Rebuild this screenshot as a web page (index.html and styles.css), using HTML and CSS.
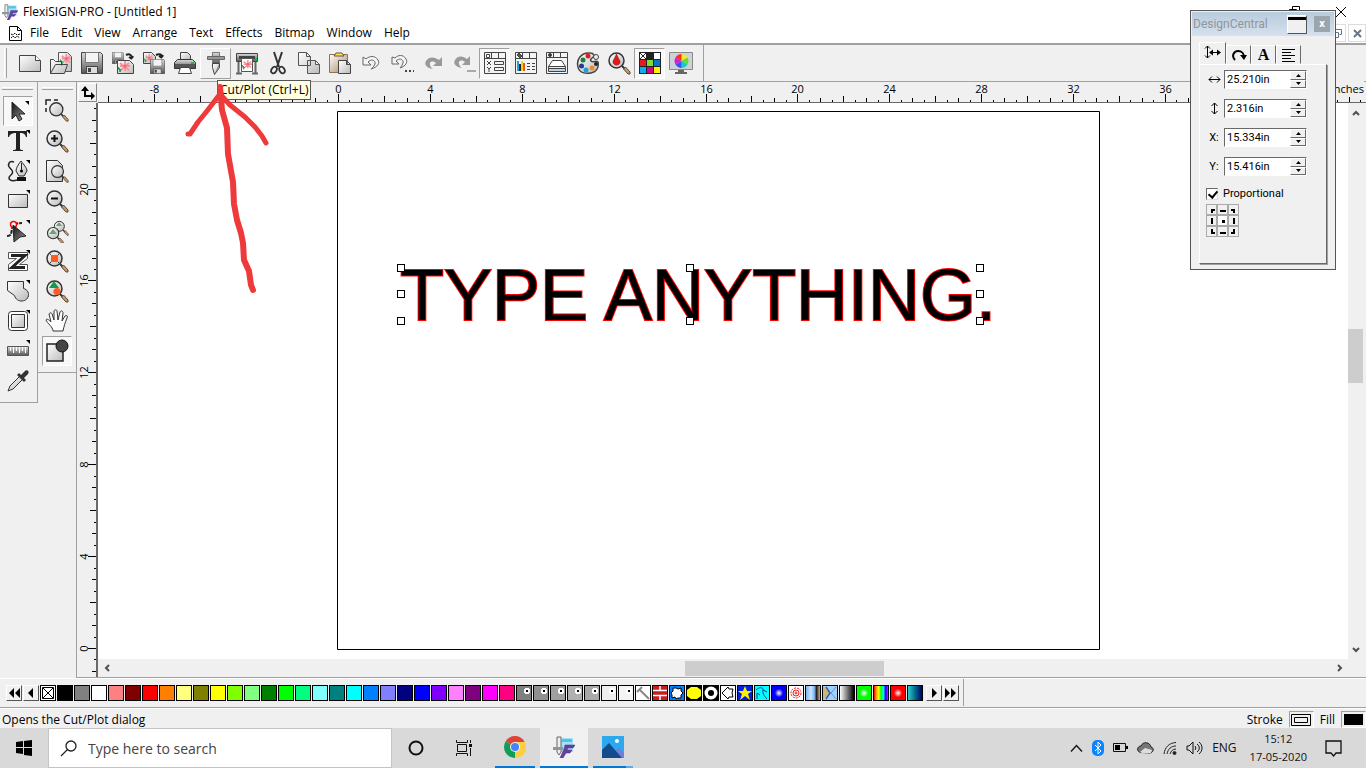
FILE: index.html
```html
<!DOCTYPE html>
<html lang="en">
<head>
<meta charset="UTF-8">
<meta name="viewport" content="width=device-width, initial-scale=1.0">
<title>FlexiSIGN-PRO - [Untitled 1]</title>
<link rel="stylesheet" href="styles.css">
</head>
<body>

<!-- shared gradients and symbols -->
<svg class="defs" aria-hidden="true">
<defs>
<linearGradient id="g" x1="0" y1="0" x2="1" y2="1"><stop offset="0" stop-color="#fff"/><stop offset="1" stop-color="#bbb"/></linearGradient>
<linearGradient id="gd" x1="0" y1="0" x2="0" y2="1"><stop offset="0" stop-color="#ddd"/><stop offset="1" stop-color="#555"/></linearGradient>
<linearGradient id="dk" x1="0" y1="0" x2="1" y2="1"><stop offset="0" stop-color="#111"/><stop offset="1" stop-color="#999"/></linearGradient>
<linearGradient id="tan" x1="0" y1="0" x2="1" y2="1"><stop offset="0" stop-color="#fff"/><stop offset="1" stop-color="#a8845c"/></linearGradient>
<symbol id="lens" viewBox="0 0 24 24"><path d="M15 15l3 3" stroke="#333" stroke-width="2"/><path d="M16.500 18l2-2 4.500 5v2h-2z" fill="#c59a6c" stroke="#5a4630"/><circle cx="9.500" cy="9.500" r="7.500" fill="url(#g)" stroke="#333" stroke-width="1.500"/></symbol>
<symbol id="flower" viewBox="0 0 12 12"><path d="M7 0v10M2 2l9 7M11 2L3 9M2 5h10" stroke="#f4929a" stroke-width="1.800"/><circle cx="7" cy="5" r="1.500" fill="#ea6670"/><path d="M0 6l3 3-1 2z" fill="#22a045" stroke="#22a045"/></symbol>
<symbol id="floppy" viewBox="0 0 22 22"><path d="M.5 .5h19l2 2v19H.5z" fill="url(#gd)" stroke="#444"/><path d="M4.500 .5h13v10h-13z" fill="#f4f4f4" stroke="#777"/><path d="M5.500 14.500h11v7h-11z" fill="#ddd" stroke="#444"/><path d="M7 16h3v4H7z" fill="#444"/></symbol>
<symbol id="flexi" viewBox="0 0 22 22"><path d="M8 2h12v14H8z" fill="#a5e2f5"/><path d="M9 3h10v3H9z" fill="#4cc4ec"/><path d="M4 1h4v15l-2 3-2-3z" fill="#eee" stroke="#666"/><path d="M0 11h10v3H0z" fill="#8b979d"/><path d="M12 9h10l-2 3h-5l-1 2h5l-2 3h-4l-3 5H7l4-9z" fill="#6542a1" stroke="#47307e" stroke-width=".5"/></symbol>
<radialGradient id="rb"><stop offset="0" stop-color="#fff"/><stop offset=".6" stop-color="#00f"/></radialGradient>
<radialGradient id="rg"><stop offset="0" stop-color="#fff"/><stop offset=".6" stop-color="#0f0"/></radialGradient>
<radialGradient id="rr"><stop offset="0" stop-color="#fff"/><stop offset=".6" stop-color="#f00"/></radialGradient>
</defs>
</svg>

<header class="titlebar">
<svg class="app-icon" width="16" height="16"><use href="#flexi"/></svg>
<span>FlexiSIGN-PRO - [Untitled 1]</span>
<div class="window-buttons">
<button aria-label="Restore"><svg width="12" height="12" fill="none" stroke="#000"><path d="M.5 3.500h7v7h-7zM3.500 3V.5h7v7H8"/></svg></button>
<button aria-label="Close"><svg width="12" height="12" stroke="#000"><path d="M1 1l10 10M11 1L1 11"/></svg></button>
</div>
</header>

<nav class="menubar">
<svg class="doc-icon" width="13" height="15" viewBox="0 0 13 15" fill="none" stroke="#000"><path d="M.5 .5h8l4 4v10H.5zM8.500 .5v4h4"/><path d="M2 8l2 1 2-2 2 2 3-1M2 12l2-2 2 2 2-2 3 2" stroke-dasharray="2 1"/></svg>
<a href="#">File</a><a href="#">Edit</a><a href="#">View</a><a href="#">Arrange</a><a href="#">Text</a><a href="#">Effects</a><a href="#">Bitmap</a><a href="#">Window</a><a href="#">Help</a>
<div class="mdi-buttons">
<button aria-label="Restore document"><svg width="9" height="9" fill="none" stroke="#667789" stroke-width="1"><path d="M.5 3.500h5v5h-5zM2.500 2.500v-2h6v5h-2"/></svg></button>
<button aria-label="Close document"><svg width="9" height="9" stroke="#667789" stroke-width="2"><path d="M1 1l7 7M8 1L1 8"/></svg></button>
</div>
</nav>

<div class="toolbar">
<div class="toolbar-group">
<span class="grip"></span>
<button aria-label="New"><svg viewBox="0 0 24 24"><path d="M1.500 4.500h16l5 5v11h-21z" fill="url(#g)" stroke="#444"/><path d="M17.500 4.500v5h5" fill="#fff" stroke="#444"/></svg></button>
<button aria-label="Open"><svg viewBox="0 0 24 24"><path d="M9.500 1.500h9l4 4v15h-13z" fill="url(#g)" stroke="#555"/><use href="#flower" x="11" y="3" width="11" height="11"/><path d="M1.500 22.500v-14h3l2 2h6v4M1.500 22.500l5-9h12l-3 9z" fill="url(#g)" stroke="#444"/></svg></button>
<button aria-label="Save"><svg viewBox="0 0 24 24"><use href="#floppy" x="1" y="1" width="22" height="22"/></svg></button>
<button aria-label="Import"><svg viewBox="0 0 24 24"><use href="#floppy" x="1" y="1" width="12" height="12"/><path d="M15 4c4-2 6 1 6 3l1-2m-1 3l-3-2" fill="none" stroke="#222" stroke-width="2"/><path d="M6.500 9.500h12l4 4v9h-16z" fill="url(#g)" stroke="#444"/><use href="#flower" x="7" y="10" width="12" height="12"/></svg></button>
<button aria-label="Export"><svg viewBox="0 0 24 24"><path d="M1.500 1.500h8l4 4v7h-12z" fill="url(#g)" stroke="#444"/><use href="#flower" x="2" y="3" width="9" height="9"/><path d="M14 4c4-2 6 0 6 2l1-2m-1 3l-3-2" fill="none" stroke="#222" stroke-width="2"/><use href="#floppy" x="8" y="8" width="15" height="15"/></svg></button>
<button aria-label="Print"><svg viewBox="0 0 24 24"><path d="M7.500 8.500v-7h7l3 3v4z" fill="url(#g)" stroke="#444"/><path d="M1.500 17.500v-6l3-3h15l3 3v6z" fill="url(#gd)" stroke="#333"/><path d="M2 13h20v4H2z" fill="#555"/><path d="M18 11h3v2h-3z" fill="#1b4"/><path d="M5.500 22.500l2-6h9l2 6z" fill="#fff" stroke="#444"/></svg></button>
<button class="hover" aria-label="Cut/Plot"><svg viewBox="0 0 24 24"><path d="M8.500 1.500h7v4h-7zM8.500 8.500h7v4h-7z" fill="url(#gd)" stroke="#777"/><path d="M3.500 5.500h17v3h-17z" fill="#999" stroke="#666"/><path d="M8.500 12.500h7v4l-5 7-2-7z" fill="url(#g)" stroke="#444"/><path d="M11 22l4-6v-3z" fill="#333" opacity=".5"/></svg></button>
<button aria-label="RIP and Print"><svg viewBox="0 0 24 24"><path d="M3.500 9v13M20.500 9v13M1 22.500h6M17 22.500h6" stroke="#666" stroke-width="2"/><path d="M1.500 2.500h21v8h-21z" fill="url(#gd)" stroke="#444"/><path d="M4 5h16v3H4z" fill="#444"/><path d="M20 7h2v3h-2z" fill="#1b4"/><path d="M6.500 7.500h11v13h-11z" fill="#fff" stroke="#555"/><use href="#flower" x="7" y="9" width="10" height="10"/></svg></button>
<button aria-label="Cut"><svg viewBox="0 0 24 24" fill="none" stroke="#333"><path d="M8 1l5 15M16 1l-5 15" stroke-width="2"/><ellipse cx="8" cy="19" rx="2.500" ry="3.500" stroke-width="1.800" transform="rotate(30 8 19)"/><ellipse cx="16" cy="19" rx="2.500" ry="3.500" stroke-width="1.800" transform="rotate(-30 16 19)"/></svg></button>
<button aria-label="Copy"><svg viewBox="0 0 24 24" fill="url(#g)" stroke="#555"><path d="M1.500 1.500h8l4 4v9h-12zM9.500 1.500v4h4M10.500 9.500h8l4 4v9h-12zM18.500 9.500v4h4"/></svg></button>
<button aria-label="Paste"><svg viewBox="0 0 24 24"><path d="M1.500 3.500h18v18h-18z" fill="url(#tan)" stroke="#8b7355"/><path d="M6 5l2-3h6l2 3z" fill="#ffe56b" stroke="#655330"/><path d="M10.500 9.500h8l4 4v9h-12zM18.500 9.500v4h4" fill="url(#g)" stroke="#444"/></svg></button>
<button aria-label="Undo"><svg viewBox="0 0 24 24"><path d="M4 6v8h8l-3-3c4-4 8-1 7 2-1 3-4 5-4 5 7-2 9-6 7-9-3-5-9-4-12-1z" fill="#f5f5f5" stroke="#666"/></svg></button>
<button aria-label="Undo list"><svg viewBox="0 0 24 24"><path d="M2 6v7h7l-3-3c4-4 8-1 7 2-1 3-3 5-3 5 6-2 8-6 6-9-3-5-8-4-11-1z" fill="#f5f5f5" stroke="#666"/><path d="M15 19h2v2h-2zM19 19h2v2h-2zM23 19h1v2h-1z" fill="#444"/></svg></button>
<button aria-label="Redo"><svg viewBox="0 0 24 24"><path d="M21 6v9h-9l3-3c-4-3-7-1-6 2s3 4 3 4c-7-1-9-5-7-8 3-5 9-4 13-1z" fill="#999"/></svg></button>
<button aria-label="Redo list"><svg viewBox="0 0 24 24"><path d="M18 5v9h-8l3-3c-4-3-7-1-6 2s3 4 3 4c-7-1-9-5-7-8 3-5 8-4 12-1z" fill="#999"/><path d="M15 19h9v2h-9z" fill="#aaa"/></svg></button>
<button class="pressed" aria-label="DesignCentral"><svg viewBox="0 0 24 24" fill="#f4f4f4" stroke="#444"><path d="M1.500 1.500h21v21h-21zM1.500 7.500h21M8.500 2v5M15.500 2v5"/><path d="M3.500 3.500h3v3h-3z" fill="#fff"/><path d="M11.500 10.500h9v3h-9zM11.500 16.500h9v3h-9z"/><path d="M4 10l4 4M8 10l-4 4M4 16l2 2 2-2M6 18v3" fill="none"/></svg></button>
<button aria-label="Fill/Stroke editor"><svg viewBox="0 0 24 24" fill="#f4f4f4" stroke="#444"><path d="M1.500 1.500h21v21h-21zM1.500 7.500h21M8.500 2v5M15.500 2v5"/><path d="M3 4l2-2 3 3-2 2z" fill="#555"/><g stroke="none"><path d="M3 10h2v10H3z" fill="#16a4e0"/><path d="M5 13h2v7H5z" fill="#222"/><path d="M7 10h2v10H7z" fill="#f6d312"/><path d="M9 12h2v8H9z" fill="#e8552a"/></g><path d="M13 12.500h3m2 0h3M13 15.500h3m2 0h3M13 18.500h3m2 0h3"/></svg></button>
<button aria-label="Design editor"><svg viewBox="0 0 24 24" fill="#f4f4f4" stroke="#444"><path d="M1.500 1.500h21v21h-21zM1.500 6.500h21M8.500 2v4M15.500 2v4"/><circle cx="5" cy="4" r="1.500" fill="#333"/><path d="M3.500 17.500v3h17v-3z" fill="#b5d5ee"/><path d="M3.500 17.500v-2h17v2z" fill="#e3eff8"/><path d="M3.500 15.500l4-6h9l4 6z" fill="#fff"/></svg></button>
<button aria-label="Color mixer"><svg viewBox="0 0 24 24"><path d="M14 2C5 1 0 9 2 16c1 6 8 7 13 6 6-1 8-6 7-11-2-2-5 1-7-1s4-4 3-6-2-2-4-2z" fill="url(#g)" stroke="#444" stroke-width="1.500"/><circle cx="12" cy="5" r="2.500" fill="#e02020"/><circle cx="7" cy="9" r="2.500" fill="#18803a"/><circle cx="5.500" cy="15" r="2.500" fill="#2a3796"/><circle cx="10" cy="19" r="2.500" fill="#19a3dc"/><circle cx="16" cy="17" r="2.500" fill="#ef8a27"/><circle cx="20" cy="13" r="2" fill="#222"/><circle cx="20" cy="6" r="2.500" fill="#eee" stroke="#444"/></svg></button>
<button aria-label="Color picker"><svg viewBox="0 0 24 24"><use href="#lens" width="24" height="24"/><path d="M9.500 3c-2 5-3.500 6-3.500 8 0 4 7 4 7 0 0-2-1.500-3-3.500-8z" fill="#e01a1a" stroke="#8b1111" stroke-width=".6"/></svg></button>
<button class="pressed" aria-label="Swatch table"><svg viewBox="0 0 24 24"><path d="M1 1h22v22H1z" fill="#222"/><path d="M2 2h6v6H2zM16 2h6v6h-6z" fill="#fff"/><path d="M2 2l6 6M8 2L2 8" stroke="#222"/><path d="M2 9h6v6H2z" fill="#e11b22"/><path d="M9 9h6v6H9z" fill="#82dc2c"/><path d="M16 9h6v6h-6z" fill="#0876c8"/><path d="M2 16h6v6H2z" fill="#0faeea"/><path d="M9 16h6v6H9z" fill="#d60084"/><path d="M16 16h6v6h-6z" fill="#fff200"/></svg></button>
<button aria-label="Color settings"><svg viewBox="0 0 24 24"><path d="M.5 1.500h23v17H.5z" fill="#ccd3d7" stroke="#888"/><path d="M9 19h6v2h3v2H6v-2h3z" fill="#666"/><path d="M12.500 10V3a7 7 0 0 1 6 3.500z" fill="#f6e82c"/><path d="M12.500 10l6-3.500a7 7 0 0 1 0 7z" fill="#65dc30"/><path d="M12.500 10l6 3.500a7 7 0 0 1-6 3.500z" fill="#20c5c7"/><path d="M12.500 10v7a7 7 0 0 1-6-3.500z" fill="#3653ee"/><path d="M12.500 10l-6 3.500a7 7 0 0 1 0-7z" fill="#d020dc"/><path d="M12.500 10l-6-3.500A7 7 0 0 1 12.500 3z" fill="#fb3028"/></svg></button>
</div>
</div>

<main class="work">
<div class="tools">
<div class="tool-column first">
<span class="grip-h"></span>
<button class="pressed flyout" aria-label="Select"><svg viewBox="0 0 24 24"><path d="M6 3v17l4-4 3 6 3-2-3-5h6z" fill="url(#dk)" stroke="#222"/></svg></button>
<button class="flyout" aria-label="Text"><svg viewBox="0 0 24 24"><path d="M2 2h19v6h-1c-1-3-2-4-6-4v15c0 2 1 2 3 2v1H7v-1c2 0 3 0 3-2V4C6 4 4 5 3 8H2z" fill="#222"/></svg></button>
<button class="flyout" aria-label="Bezier"><svg viewBox="0 0 24 24"><path d="M8 3C3 1 1 6 4 9s4 5 0 8c-3 3 1 6 7 4" fill="none" stroke="#222" stroke-width="1.500"/><path d="M15 2c-3 4-5 7-5 10l3 5h5l3-5c0-3-3-6-6-10z" fill="url(#g)" stroke="#222"/><path d="M15.500 4v8" stroke="#222"/><circle cx="15.500" cy="12" r="1.500"/><path d="M11 18h9v4h-9z" fill="#111"/></svg></button>
<button class="flyout" aria-label="Rectangle"><svg viewBox="0 0 24 24"><path d="M2.500 5.500h19v13h-19z" fill="url(#g)" stroke="#333"/></svg></button>
<button class="flyout" aria-label="Effects"><svg viewBox="0 0 24 24"><path d="M1 17c5 0 4-3 5-7 0-4 4-6 10-6" fill="none" stroke="#222" stroke-width="2" stroke-dasharray="4 1"/><circle cx="7.500" cy="5.500" r="3" fill="#fff" stroke="red" stroke-width="1.500"/><path d="M7 6l13 11-6 1-6 5z" fill="url(#dk)" stroke="#222"/></svg></button>
<button class="flyout" aria-label="Outline"><svg viewBox="0 0 24 24"><path d="M2.500 3.500h19v6l-8 6h8v6h-19v-6l8-6h-8z" fill="#fff" stroke="#555"/><path d="M5 6.500h14L6 18.500h13" fill="none" stroke="#222" stroke-width="3"/></svg></button>
<button class="flyout" aria-label="Weld"><svg viewBox="0 0 24 24"><path d="M1.500 2.500h16v7c4 1 5 4 5 6 0 8-12 9-14 1l-7-5z" fill="url(#g)" stroke="#333"/></svg></button>
<button class="flyout" aria-label="Contour"><svg viewBox="0 0 24 24"><rect x="2.500" y="2.500" width="19" height="19" rx="3" fill="#fff" stroke="#333"/><path d="M5.500 5.500h13v13h-13z" fill="url(#g)" stroke="#333"/></svg></button>
<button class="flyout" aria-label="Measure"><svg viewBox="0 0 24 24"><path d="M1.500 7.500h21v9h-21z" fill="url(#gd)" stroke="#555"/><path d="M4.500 8v4M7.500 8v6M10.500 8v4M13.500 8v6M16.500 8v4M19.500 8v6" stroke="#fff"/></svg></button>
<button aria-label="Eye dropper"><svg viewBox="0 0 24 24"><path d="M2 22l2-5L14 7l3 3L7 20z" fill="url(#g)" stroke="#333"/><path d="M11 6l2-2 2 2 4-4c2-2 5 1 3 3l-4 4 2 2-2 2z" fill="#333"/></svg></button>
</div>
<div class="tool-column second">
<span class="grip-h"></span>
<button aria-label="Zoom area"><svg viewBox="0 0 24 24"><use href="#lens" x="3" y="2" width="21" height="21"/><path d="M1 6V1h5M9 1h4M1 9v4" fill="none" stroke="#222" stroke-width="1.500"/></svg></button>
<button aria-label="Zoom in"><svg viewBox="0 0 24 24"><use href="#lens" width="24" height="24"/><path d="M9.500 6v7M6 9.500h7" stroke="#111" stroke-width="2"/></svg></button>
<button aria-label="Zoom page"><svg viewBox="0 0 24 24"><path d="M1.500 1.500h11l5 5v16h-16z" fill="url(#g)" stroke="#333"/><use href="#lens" x="5" y="5" width="19" height="19"/></svg></button>
<button aria-label="Zoom out"><svg viewBox="0 0 24 24"><use href="#lens" width="24" height="24"/><path d="M6 9.500h7" stroke="#111" stroke-width="2"/></svg></button>
<button aria-label="Previous view"><svg viewBox="0 0 24 24"><use href="#lens" x="8" y="1" width="16" height="16"/><use href="#lens" x="1" y="7" width="18" height="18"/><path d="M4 15l4-5 4 5zM11 7l3-4 3 4z" fill="#6ba56c"/></svg></button>
<button aria-label="Zoom selected"><svg viewBox="0 0 24 24"><use href="#lens" width="24" height="24"/><path d="M4 4l11 11M15 4L4 15" stroke="#444"/><path d="M6 6h7v7H6z" fill="#ff5a1f"/></svg></button>
<button aria-label="Zoom all"><svg viewBox="0 0 24 24"><use href="#lens" width="24" height="24"/><path d="M4 9l5-7 5 7z" fill="#15994a"/><circle cx="12" cy="12.500" r="3.500" fill="#ff5a1f"/></svg></button>
<button aria-label="Pan"><svg viewBox="0 0 24 24"><path d="M8 22c0-4-6-8-7-11 1-2 3 0 5 2L4 5c1-2 3-1 3 0l2 6V2c1-2 3-1 3 0l1 9 2-8c1-2 3-1 3 1l-1 8 3-5c2-1 3 0 2 2-2 5-3 8-4 13z" fill="#fff" stroke="#333"/></svg></button>
<button class="pressed" aria-label="Show fill"><svg viewBox="0 0 24 24"><path d="M2 5h16v17H2z" fill="url(#g)" stroke="#222" stroke-width="1.500"/><circle cx="17" cy="7" r="6" fill="#444" stroke="#111"/></svg></button>
</div>
</div>

<div class="document">
<button class="origin" aria-label="Ruler origin"><svg width="16" height="16" viewBox="0 0 16 16"><path d="M5 4v7h8" fill="none" stroke="#000" stroke-width="2"/><path d="M5 1l4 5H1zM15 11l-4 4V7z"/></svg></button>
<div class="ruler-top"><svg id="hruler"></svg><span class="units">inches</span></div>
<div class="ruler-left"><svg id="vruler"></svg></div>
<div class="canvas">
<svg class="drawing">
<path d="M239.500 8.500h762v538h-762z" fill="#fff" stroke="#000"/>
<text class="artwork" x="302" y="217">TYPE ANYTHING.</text>
<g fill="#fff" stroke="#000" shape-rendering="crispEdges">
<path d="M299.500 161.500h7v7h-7zM299.500 187.500h7v7h-7zM299.500 214.500h7v7h-7z"/>
<path d="M588.500 161.500h7v7h-7zM588.500 214.500h7v7h-7z"/>
<path d="M878.500 161.500h7v7h-7zM878.500 187.500h7v7h-7zM878.500 214.500h7v7h-7z"/>
</g>
</svg>
</div>
<div class="vscroll">
<svg width="8" height="6"><path d="M1 5l3-3 3 3" fill="none" stroke="#505050" stroke-width="2"/></svg>
<span class="vthumb"></span>
<svg width="8" height="6"><path d="M1 1l3 3 3-3" fill="none" stroke="#505050" stroke-width="2"/></svg>
</div>
<div class="hscroll">
<svg width="6" height="8"><path d="M5 1L2 4l3 3" fill="none" stroke="#505050" stroke-width="2"/></svg>
<span class="hthumb"></span>
<svg width="6" height="8"><path d="M1 1l3 3-3 3" fill="none" stroke="#505050" stroke-width="2"/></svg>
</div>
</div>
</main>

<div class="palette">
<div class="palette-group">
<button class="step" aria-label="First colors"><svg width="12" height="10"><path d="M6 0v10L1 5zM12 0v10L7 5z"/></svg></button>
<button class="step" aria-label="Previous colors"><svg width="12" height="10"><path d="M8 0v10L3 5z"/></svg></button>
<div class="swatches" id="swatches">
<button class="swatch none" aria-label="No color"><svg viewBox="0 0 14 14"><path d="M1.500 1.500h11v11h-11z" fill="#fff" stroke="#000"/><path d="M2 2l10 10M12 2L2 12" stroke="#000"/></svg></button>
</div>
<div class="swatches">
<button class="swatch" aria-label="Hammer"><svg viewBox="0 0 14 14"><path d="M1 6l5-5M4 4l9 9" stroke="#888" stroke-width="2"/></svg></button>
<button class="swatch" aria-label="Brick"><svg viewBox="0 0 14 14"><path d="M0 0h14v14H0z" fill="#c81e1e"/><path d="M0 4.500h14M0 9.500h14M7 0v4M7 10v4" stroke="#fff" stroke-width="1.500"/></svg></button>
<button class="swatch" aria-label="Cloud"><svg viewBox="0 0 14 14"><path d="M0 0h14v14H0z" fill="#0080ff"/><path d="M3 2h3l2 1 3-1v3l2 2-2 2v3H8l-2 1-1-2-3 1V9L1 7l2-2z" fill="#fff" stroke="#000"/></svg></button>
<button class="swatch" aria-label="Hexagon"><svg viewBox="0 0 14 14"><path d="M0 0h14v14H0z"/><path d="M4 1h6l4 3v6l-4 3H4l-4-3V4z" fill="#ff0"/></svg></button>
<button class="swatch" aria-label="Dot"><svg viewBox="0 0 14 14"><path d="M0 0h14v14H0z"/><circle cx="7" cy="7" r="6.500" fill="#fff"/><circle cx="7" cy="7" r="3"/></svg></button>
<button class="swatch" aria-label="Shape"><svg viewBox="0 0 14 14" fill="none" stroke="#000"><path d="M1 7l6-6 1 2h4l-1 4 1 4H8l-1 2z"/></svg></button>
<button class="swatch" aria-label="Star"><svg viewBox="0 0 14 14"><path d="M0 0h14v14H0z" fill="#0020e0"/><path d="M7 0l2 5h5l-4 3 2 6-5-4-5 4 2-6-4-3h5z" fill="#ffef00"/></svg></button>
<button class="swatch" aria-label="Waves"><svg viewBox="0 0 14 14"><path d="M0 0h14v14H0z" fill="#0ff"/><path d="M2 13V7l3 2M1 4c4-4 8-2 7 0s1 6 4 9M8 4l4 2" fill="none" stroke="#0040a0"/></svg></button>
<button class="swatch" aria-label="Blue radial"><svg viewBox="0 0 14 14"><path d="M0 0h14v14H0z" fill="url(#rb)"/></svg></button>
<button class="swatch" aria-label="Rose"><svg viewBox="0 0 14 14" fill="none" stroke="#f01818"><circle cx="7" cy="7" r="5" stroke-dasharray="2 1"/><circle cx="7" cy="7" r="3"/><circle cx="7" cy="7" r="1"/></svg></button>
<button class="swatch chrome" aria-label="Chrome"></button>
<button class="swatch" aria-label="Kaleidoscope"><svg viewBox="0 0 14 14"><path d="M0 0h14v14H0z" fill="#9fd0ff"/><path d="M0 0l7 7-7 7z" fill="#c9b679"/><path d="M3 1l4 6-4 6" stroke="#335f9c" fill="none" stroke-width="1.500"/><path d="M13 1L8 7l5 6" stroke="#5c94d8" fill="none"/></svg></button>
<button class="swatch mono" aria-label="Gray gradient"></button>
<button class="swatch" aria-label="Green radial"><svg viewBox="0 0 14 14"><path d="M0 0h14v14H0z" fill="url(#rg)"/></svg></button>
<button class="swatch rainbow" aria-label="Rainbow"></button>
<button class="swatch" aria-label="Red radial"><svg viewBox="0 0 14 14"><path d="M0 0h14v14H0z" fill="url(#rr)"/></svg></button>
<button class="swatch sea" aria-label="Teal gradient"></button>
</div>
<button class="step" aria-label="Next colors"><svg width="12" height="10"><path d="M4 0v10l5-5z"/></svg></button>
<button class="step" aria-label="Last colors"><svg width="12" height="10"><path d="M0 0v10l5-5zM6 0v10l5-5z"/></svg></button>
</div>
</div>

<div class="statusbar">
<span>Opens the Cut/Plot dialog</span>
<div class="status-right">
<span>Stroke</span>
<span class="stroke-box"><svg width="20" height="12" fill="none" stroke="#000"><path d="M.5 .5h19v11H.5zM3.500 3.500h13v5h-13z"/></svg></span>
<span>Fill</span>
<span class="fill-box"></span>
</div>
</div>

<footer class="taskbar">
<button class="start" aria-label="Start"><svg width="16" height="16"><path d="M0 2l7-1v6H0zM8 1l8-1v7H8zM0 8h7v6l-7-1zM8 8h8v8l-8-1z"/></svg></button>
<label class="search">
<svg width="17" height="17" fill="none" stroke="#222" stroke-width="1.300"><circle cx="11" cy="6" r="5"/><path d="M7.500 9.500L1 16"/></svg>
<input type="text" placeholder="Type here to search" aria-label="Type here to search">
</label>
<button class="task" aria-label="Cortana"><svg width="16" height="16"><circle cx="8" cy="8" r="6.500" fill="none" stroke="#111" stroke-width="2"/></svg></button>
<button class="task" aria-label="Task view"><svg width="17" height="16" fill="none" stroke="#111"><path d="M1.500 4.500h9v7h-9zM.5 0v2.500h11V0M.5 16v-2.500h11V16M14.500 0v3M14.500 8v8"/><path d="M13 4h3v3h-3z" fill="#111" stroke="none"/></svg></button>
<button class="app" aria-label="Chrome"><svg width="22" height="22" viewBox="0 0 22 22"><path d="M11 11L1.500 5.500a11 11 0 0 1 19 0z" fill="#db4437"/><path d="M11 11L20.500 5.500A11 11 0 0 1 11 22z" fill="#ffcd40"/><path d="M11 11v11A11 11 0 0 1 1.500 5.500z" fill="#0f9d58"/><path d="M11 6h9.800A11 11 0 0 1 11 22l4.500-8.500z" fill="#ffcd40"/><circle cx="11" cy="11" r="5" fill="#f1f1f1"/><circle cx="11" cy="11" r="4" fill="#4285f4"/></svg></button>
<button class="app active" aria-label="FlexiSIGN-PRO"><svg width="22" height="22"><use href="#flexi"/></svg></button>
<button class="app stacked" aria-label="Photos"><svg width="22" height="22"><path d="M0 0h22v22H0z" fill="#2ba8ee"/><path d="M10 22l6-11 6 6v5z" fill="#6a83d8"/><path d="M0 14l7-7 13 15H0z" fill="#144b8c"/><circle cx="15" cy="5" r="2" fill="#fff"/></svg></button>
<div class="tray">
<button aria-label="Show hidden icons"><svg width="13" height="13" fill="none" stroke="#111" stroke-width="1.300"><path d="M1 9.500l5.500-6 5.500 6"/></svg></button>
<button aria-label="Bluetooth"><svg width="12" height="16"><rect width="12" height="16" rx="5" fill="#0a84ff"/><path d="M3 5l6 6-3 3V2l3 3-6 6" fill="none" stroke="#fff"/></svg></button>
<button aria-label="Battery"><svg width="15" height="10"><path d="M.5 .5h12v8H.5z" fill="none" stroke="#111"/><path d="M2 2h5v5H2zM13 3h2v3h-2z"/></svg></button>
<button aria-label="OneDrive"><svg width="17" height="12"><path d="M4 10.500C-1 10 0 4 4 4c2-5 9-4 10 1 4 1 2 6-1 6z" fill="#777" stroke="#222"/><path d="M3 10l5-4 7 2-1 3H5z" fill="#ddd"/></svg></button>
<button aria-label="Network"><svg width="14" height="14" fill="none" stroke="#222"><path d="M1 13C2 6 6 2 13 1.500M4 13c1-5 4-8 9-8M7 13c1-3 3-5 6-5"/><circle cx="11.500" cy="12" r="1.500" fill="#222"/></svg></button>
<button aria-label="Volume"><svg width="17" height="14" fill="none" stroke="#111"><path d="M1 5h2l4-4v12L3 9H1zM9 5c1 1 1 3 0 4M11 3c3 2 3 6 0 8M13 1c4 3 4 9 0 12"/></svg></button>
<span class="lang">ENG</span>
<span class="clock">15:12<br>17-05-2020</span>
<button aria-label="Notifications"><svg width="17" height="17"><path d="M1 1h15v12h-5l-2.500 3L6 13H1z" fill="none" stroke="#111" stroke-width="1.300"/></svg></button>
</div>
</footer>

<!-- floating panel -->
<section class="design-central">
<div class="dc-title">
<span>DesignCentral</span>
<button class="dc-roll" aria-label="Roll up"></button>
<button class="dc-close" aria-label="Close panel">x</button>
</div>
<div class="dc-tabs">
<button class="dc-tab current" aria-label="Size"><svg width="17" height="14" fill="none" stroke="#000"><path d="M3.500 1v12M1 3.500L3.500 1 6 3.500M1 10.500L3.500 13 6 10.500M6 7.500h9"/><path d="M5 7.500l4-3v6zM17 7.500l-4-3v6z" fill="#000" stroke="none"/></svg></button>
<button class="dc-tab" aria-label="Rotate"><svg width="16" height="14"><path d="M4 12C0 8 3 3 7 3s6 3 6 6" fill="none" stroke="#000" stroke-width="2"/><path d="M9 7h7l-3 5z"/></svg></button>
<button class="dc-tab letter" aria-label="Character">A</button>
<button class="dc-tab" aria-label="Paragraph"><svg width="16" height="14" stroke="#000"><path d="M1 1.500h13M1 4.500h9M1 7.500h13M1 10.500h9M1 13.500h13"/></svg></button>
</div>
<div class="dc-body">
<div class="field"><label for="w" aria-label="Width"><svg width="13" height="9" stroke="#000" fill="none"><path d="M1 4.500h11M4 1.500l-3 3 3 3M9 1.500l3 3-3 3"/></svg></label><span class="spin"><input id="w" type="text" value="25.210in"><span class="arrows"><button aria-label="Width up"><svg viewBox="0 0 5 3"><path d="M0 3l2.500-3L5 3z"/></svg></button><button aria-label="Width down"><svg viewBox="0 0 5 3"><path d="M0 0h5L2.500 3z"/></svg></button></span></span></div>
<div class="field"><label for="h" aria-label="Height"><svg width="9" height="13" stroke="#000" fill="none"><path d="M4.500 1v11M1.500 4l3-3 3 3M1.500 9l3 3 3-3"/></svg></label><span class="spin"><input id="h" type="text" value="2.316in"><span class="arrows"><button aria-label="Height up"><svg viewBox="0 0 5 3"><path d="M0 3l2.500-3L5 3z"/></svg></button><button aria-label="Height down"><svg viewBox="0 0 5 3"><path d="M0 0h5L2.500 3z"/></svg></button></span></span></div>
<div class="field"><label for="x">X:</label><span class="spin"><input id="x" type="text" value="15.334in"><span class="arrows"><button aria-label="X up"><svg viewBox="0 0 5 3"><path d="M0 3l2.500-3L5 3z"/></svg></button><button aria-label="X down"><svg viewBox="0 0 5 3"><path d="M0 0h5L2.500 3z"/></svg></button></span></span></div>
<div class="field"><label for="y">Y:</label><span class="spin"><input id="y" type="text" value="15.416in"><span class="arrows"><button aria-label="Y up"><svg viewBox="0 0 5 3"><path d="M0 3l2.500-3L5 3z"/></svg></button><button aria-label="Y down"><svg viewBox="0 0 5 3"><path d="M0 0h5L2.500 3z"/></svg></button></span></span></div>
<div class="check"><input id="prop" type="checkbox" checked><label for="prop">Proportional</label></div>
<div class="anchor">
<button aria-label="Top left"><svg viewBox="0 0 8 8"><path d="M3 7V3h4v2H5v2z"/></svg></button>
<button aria-label="Top"><svg viewBox="0 0 8 8"><path d="M1 4h6v2H1z"/></svg></button>
<button aria-label="Top right"><svg viewBox="0 0 8 8"><path d="M1 3h4v4H3V5H1z"/></svg></button>
<button aria-label="Left"><svg viewBox="0 0 8 8"><path d="M3 1h2v6H3z"/></svg></button>
<button class="on" aria-label="Center"><svg viewBox="0 0 8 8"><path d="M3 3h3v3H3z"/></svg></button>
<button aria-label="Right"><svg viewBox="0 0 8 8"><path d="M3 1h2v6H3z"/></svg></button>
<button aria-label="Bottom left"><svg viewBox="0 0 8 8"><path d="M3 1v5h4V4H5V1z"/></svg></button>
<button aria-label="Bottom"><svg viewBox="0 0 8 8"><path d="M1 4h6v2H1z"/></svg></button>
<button aria-label="Bottom right"><svg viewBox="0 0 8 8"><path d="M5 1v5H1V4h2V1z"/></svg></button>
</div>
</div>
</section>

<div class="tooltip">Cut/Plot (Ctrl+L)</div>

<!-- hand drawn arrow -->
<svg class="arrow" width="100" height="220" viewBox="0 0 100 220" fill="none" stroke="#ee3a3a" stroke-linecap="round" stroke-linejoin="round">
<path d="M40 7L42 30l5 18 1 26 5 28 1 22 3 16 4 13 2 10 1 17 5 11 2 14 2 5" stroke-width="6"/>
<path d="M8 54h2l8-12 9-11L40 14l10 11 15 12 10 10 7 9 4 7" stroke-width="5"/>
</svg>

<script src="script.js"></script>
</body>
</html>
```
FILE: styles.css
```css
* {
    box-sizing: border-box;
}
body {
    margin: 0;
    height: 100vh;
    display: flex;
    flex-direction: column;
    overflow: hidden;
    position: relative;
    background: #f0f0f0;
    color: #000;
    font-family: "Open Sans", "Noto Sans", sans-serif;
    font-size: 12px;
    line-height: 16px;
}
button {
    display: flex;
    align-items: center;
    justify-content: center;
    padding: 0;
    border: none;
    background: none;
    color: inherit;
    font: inherit;
}
.defs {
    position: absolute;
    width: 0;
    height: 0;
}

/* title and menu */
.titlebar {
    display: flex;
    align-items: center;
    height: 23px;
    padding: 0 19px 0 2px;
    background: #fff;
}
.app-icon {
    margin-right: 5px;
}
.window-buttons {
    display: flex;
    gap: 34px;
    margin-left: auto;
}
.menubar {
    display: flex;
    align-items: center;
    gap: 12px;
    height: 20px;
    padding-left: 9px;
    background: #fff;
}
.doc-icon {
    margin-right: -4px;
}
.menubar a {
    color: #000;
    text-decoration: none;
}
.mdi-buttons {
    display: flex;
    gap: 2px;
    margin-left: auto;
}
.mdi-buttons button {
    width: 18px;
    height: 18px;
    border: 1px solid #ddd;
}

/* toolbar */
.toolbar {
    height: 39px;
    border-top: 2px solid #a0a0a0;
    border-bottom: 1px solid #a0a0a0;
}
.toolbar-group {
    display: flex;
    align-items: center;
    width: 704px;
    height: 36px;
    border-right: 1px solid #a0a0a0;
}
.grip {
    width: 3px;
    height: 30px;
    margin: 0 7px 0 4px;
    border-right: 1px solid #a0a0a0;
    border-left: 1px solid #fff;
}
.toolbar button {
    flex: none;
    width: 31px;
    height: 31px;
}
.toolbar svg,
.tool-column svg {
    width: 24px;
    height: 24px;
}
.hover {
    border: 1px solid;
    border-color: #fff #a0a0a0 #a0a0a0 #fff;
}
.pressed {
    border: 1px solid;
    border-color: #a0a0a0 #fff #fff #a0a0a0;
    background: #f8f8f8;
}

/* work area */
.work {
    flex: 1;
    display: flex;
    min-height: 0;
}
.tools {
    display: flex;
    align-items: flex-start;
    width: 77px;
    border-right: 1px solid #a0a0a0;
}
.tool-column {
    display: flex;
    flex-direction: column;
    align-items: center;
    width: 38px;
    padding: 5px 0 6px;
    border-right: 1px solid #a0a0a0;
    border-bottom: 1px solid #a0a0a0;
}
.first {
    padding-right: 2px;
}
.second {
    border-right: none;
}
.grip-h {
    width: 31px;
    height: 3px;
    margin-bottom: 6px;
    border-top: 1px solid #fff;
    border-bottom: 1px solid #a0a0a0;
}
.tool-column button {
    position: relative;
    width: 30px;
    height: 30px;
}
.flyout::after {
    content: "";
    position: absolute;
    top: 4px;
    right: 3px;
    border-top: 4px solid #000;
    border-left: 4px solid transparent;
}
.document {
    flex: 1;
    display: grid;
    grid-template-columns: 21px 1fr 18px;
    grid-template-rows: 21px 1fr 18px;
    min-width: 0;
    border-bottom: 1px solid #a0a0a0;
}
.origin {
    width: 19px;
    height: 19px;
    margin: 1px;
    border: 1px solid;
    border-color: #fff #888 #888 #fff;
}
.ruler-top {
    grid-column: 2 / 4;
    position: relative;
    border-bottom: 1px solid #696969;
}
.ruler-left {
    grid-row: 2 / 4;
    border-right: 2px solid #696969;
}
.ruler-top svg,
.ruler-left svg,
.drawing {
    display: block;
    width: 100%;
    height: 100%;
}
.ruler-top text,
.ruler-left text {
    font-size: 11px;
    text-anchor: middle;
}
.units {
    position: absolute;
    top: -1px;
    right: 2px;
    padding-left: 2px;
    background: #f0f0f0;
    font-size: 11px;
}
.canvas {
    min-width: 0;
    min-height: 0;
    background: #fff;
}
.artwork {
    font-family: "Liberation Sans", Arial, sans-serif;
    font-size: 72px;
    stroke: #f00;
    stroke-width: 2px;
    paint-order: stroke;
}
.vscroll,
.hscroll {
    display: flex;
    align-items: center;
    justify-content: space-between;
}
.vscroll {
    flex-direction: column;
    padding: 7px 3px 6px 0;
}
.hscroll {
    grid-column: 2 / 4;
    padding: 0 23px 0 6px;
}
.vthumb {
    width: 15px;
    height: 54px;
    margin: 213px 0 auto;
    background: #cdcdcd;
}
.hthumb {
    width: 199px;
    height: 15px;
    margin: 0 auto 0 575px;
    background: #cdcdcd;
}

/* colour palette */
.palette {
    height: 30px;
    border-top: 1px solid #fff;
    border-bottom: 1px solid #a0a0a0;
}
.palette-group {
    display: flex;
    align-items: center;
    gap: 1px;
    width: 964px;
    height: 27px;
    padding-left: 6px;
    border-right: 1px solid #a0a0a0;
}
.step {
    width: 16px;
    height: 16px;
    border: 1px solid;
    border-color: #fff #555 #555 #fff;
}
.swatches {
    display: flex;
    gap: 1px;
}
.swatches + .step {
    margin-left: 2px;
}
.swatch {
    width: 16px;
    height: 16px;
    overflow: hidden;
    border: 1px solid #000;
    background: #fff;
}
.swatch svg {
    width: 14px;
    height: 14px;
}
.spot {
    background-image: radial-gradient(circle at 10px 5px, #000 0 1px, #fff 1px 3px, transparent 3px);
}
.chrome {
    background: linear-gradient(90deg, #79b6f2, #cfe5fb 35%, #7bb5ee 60%, #222 75%, #cbb37c);
}
.mono {
    background: linear-gradient(90deg, #fff, #000);
}
.rainbow {
    background: linear-gradient(90deg, red, orange, yellow, lime, cyan, blue, magenta);
}
.sea {
    background: linear-gradient(90deg, #3cc, #006c8c, #006);
}

/* status bar */
.statusbar {
    display: flex;
    align-items: center;
    justify-content: space-between;
    height: 20px;
    padding: 2px 0 0 2px;
    border-top: 1px solid #fff;
}
.status-right {
    display: flex;
    align-items: center;
    gap: 6px;
}
.stroke-box,
.fill-box {
    display: flex;
    align-items: center;
    justify-content: center;
    width: 25px;
    height: 17px;
    border: 1px solid;
    border-color: #a0a0a0 #fff #fff #a0a0a0;
}
.fill-box {
    padding: 2px;
    background: #000 content-box;
}

/* taskbar */
.taskbar {
    display: flex;
    height: 40px;
    background: #d9d9d9;
    color: #111;
}
.taskbar button {
    flex: none;
}
.start {
    width: 48px;
}
.search {
    display: flex;
    align-items: center;
    gap: 11px;
    width: 344px;
    padding-left: 11px;
    border: 1px solid #c4c4c4;
    background: #fff;
}
.search input {
    flex: 1;
    min-width: 0;
    padding: 0;
    border: none;
    outline: none;
    font-family: inherit;
    font-size: 14px;
}
.search input::placeholder {
    color: #444;
    opacity: 1;
}
.task {
    width: 48px;
}
.app {
    width: 40px;
    margin: 0 4px;
    border-bottom: 2px solid #0078d7;
}
.task + .app {
    margin-left: 7px;
}
.active {
    width: 48px;
    margin: 0 1px;
    background: #f1f1f1;
}
.stacked {
    border-image: linear-gradient(90deg, #0078d7 80%, #5fa9e8 80%) 1;
}
.tray {
    display: flex;
    align-items: center;
    gap: 9px;
    margin-left: auto;
    padding-right: 24px;
}
.lang {
    margin-right: 4px;
    font-size: 12px;
}
.clock {
    font-size: 11px;
    line-height: 18px;
    text-align: center;
}
.clock + button {
    margin-left: 9px;
}

/* DesignCentral panel */
.design-central {
    position: absolute;
    top: 10px;
    left: 1190px;
    width: 146px;
    padding: 1px 1px 5px;
    border: 1px solid #555;
    background: #f0f0f0;
    font-family: Roboto, sans-serif;
    font-size: 11px;
}
.dc-title {
    display: flex;
    align-items: center;
    height: 24px;
    padding: 0 4px 0 1px;
    background: linear-gradient(#b9cbdc, #d5e1ee);
    color: #8f969c;
    font-size: 12px;
}
.dc-roll {
    width: 20px;
    height: 19px;
    margin-left: auto;
    border: 1px solid;
    border-color: #fff #555 #555 #fff;
    background: linear-gradient(#000, #000) 0 1px / 100% 3px no-repeat, #f0f0f0;
}
.dc-close {
    width: 16px;
    height: 16px;
    margin-left: 7px;
    background: #9aa5ae;
    color: #fff;
    font-size: 11px;
    font-weight: bold;
    line-height: 12px;
}
.dc-tabs {
    display: flex;
    align-items: flex-end;
    height: 28px;
    padding: 0 7px;
}
.dc-tab {
    width: 25px;
    height: 19px;
    border: 1px solid;
    border-color: #fff #696969 transparent #fff;
}
.current {
    width: 27px;
    height: 22px;
    padding-bottom: 3px;
}
.letter {
    font-family: "Liberation Serif", serif;
    font-size: 16px;
    font-weight: bold;
}
.dc-body {
    height: 200px;
    margin: 0 7px;
    padding: 5px 0 0 6px;
    border: 1px solid;
    border-color: #fff #696969 #696969 #fff;
    box-shadow: 1px 1px 0 #a0a0a0;
}
.field {
    display: flex;
    align-items: center;
    gap: 2px;
    height: 19px;
    margin-bottom: 10px;
}
.field label {
    display: flex;
    justify-content: center;
    width: 16px;
}
.spin {
    display: flex;
    width: 83px;
    height: 19px;
    border: 1px solid;
    border-color: #696969 #fff #fff #696969;
    background: #fff;
}
.spin input {
    flex: 1;
    min-width: 0;
    padding: 0 0 0 2px;
    border: none;
    background: none;
    font: inherit;
}
.arrows {
    display: flex;
    flex-direction: column;
}
.arrows button {
    flex: 1;
    width: 16px;
    min-height: 0;
    border: 1px solid;
    border-color: #fff #696969 #696969 #fff;
    background: #f0f0f0;
}
.arrows svg {
    width: 5px;
    height: 3px;
}
.check {
    display: flex;
    align-items: center;
    gap: 5px;
    height: 16px;
}
.check input {
    appearance: none;
    width: 12px;
    height: 12px;
    margin: 0;
    border: 1px solid;
    border-color: #696969 #ddd #ddd #696969;
    background: #fff;
}
.check input:checked::after {
    content: "";
    display: block;
    width: 4px;
    height: 7px;
    margin: 0 3px;
    border: solid #000;
    border-width: 0 2px 2px 0;
    transform: rotate(40deg);
}
.anchor {
    display: grid;
    grid-template-columns: repeat(3, 11px);
    margin-top: 2px;
}
.anchor button {
    width: 11px;
    height: 11px;
    border: 1px solid;
    border-color: #fff #777 #777 #fff;
    outline: 1px solid #aaa;
    outline-offset: -1px;
}
.anchor svg {
    width: 8px;
    height: 8px;
}
.anchor .on {
    background: #fff;
}

.tooltip {
    position: absolute;
    top: 80px;
    left: 217px;
    padding: 1px 2px;
    border: 1px solid #555;
    background: #ffffe1;
}
.arrow {
    position: absolute;
    top: 80px;
    left: 180px;
    pointer-events: none;
}
```
FILE: script.js
```js
const SVG = 'http://www.w3.org/2000/svg';
const UNIT = 22.97; // pixels in one inch at this zoom

function addLine(svg, x1, y1, x2, y2) {
    const line = document.createElementNS(SVG, 'path');
    line.setAttribute('d', `M${x1} ${y1}L${x2} ${y2}`);
    line.setAttribute('stroke', '#000');
    svg.appendChild(line);
}

function addLabel(svg, x, y, value, turned) {
    const text = document.createElementNS(SVG, 'text');
    text.setAttribute('x', x);
    text.setAttribute('y', y);
    if (turned) text.setAttribute('transform', `rotate(-90 ${x} ${y})`);
    text.textContent = value;
    svg.appendChild(text);
}

// tick length depends on the position, half inches are the shortest
function tickLength(half) {
    if (half % 8 === 0) return 8;
    if (half % 4 === 0) return 6;
    if (half % 2 === 0) return 4;
    return 2;
}

function drawTopRuler() {
    const svg = document.getElementById('hruler');
    const width = svg.clientWidth;
    for (let half = -20; half < 200; half++) {
        const x = Math.round(240 + half * UNIT / 2) + 0.5;
        if (x < 0 || x > width) continue;
        addLine(svg, x, 20, x, 20 - tickLength(half));
        // the tooltip lies over the label at -4
        if (half % 8 === 0 && half !== -8 && x < width - 40) addLabel(svg, x, 11, half / 2);
    }
}

function drawLeftRuler() {
    const svg = document.getElementById('vruler');
    const height = svg.clientHeight;
    for (let half = -8; half < 200; half++) {
        const y = Math.round(545 - half * UNIT / 2) + 0.5;
        if (y < 0 || y > height) continue;
        addLine(svg, 19, y, 19 - tickLength(half), y);
        if (half % 8 === 0) addLabel(svg, 11, y, half / 2, true);
    }
}

const colors = ['#000000', '#808080', '#ffffff', '#ff8080', '#800000', '#ff0000', '#ff8000', '#ffff80',
    '#808000', '#ffff00', '#80ff00', '#80ff80', '#008000', '#00ff00', '#00ff80', '#80ffff', '#008080',
    '#00ffff', '#0080ff', '#8080ff', '#000080', '#0000ff', '#8000ff', '#ff80ff', '#800080', '#ff00ff', '#ff0080'];
const spots = ['#808080', '#909090', '#a0a0a0', '#b0b0b0', '#a8a8a8', '#eeeeee', '#f4f4f4'];

function addSwatch(color, className) {
    const button = document.createElement('button');
    button.className = className;
    button.style.backgroundColor = color;
    button.setAttribute('aria-label', color);
    document.getElementById('swatches').appendChild(button);
}

drawTopRuler();
drawLeftRuler();
colors.forEach(color => addSwatch(color, 'swatch'));
spots.forEach(color => addSwatch(color, 'swatch spot'));
```
